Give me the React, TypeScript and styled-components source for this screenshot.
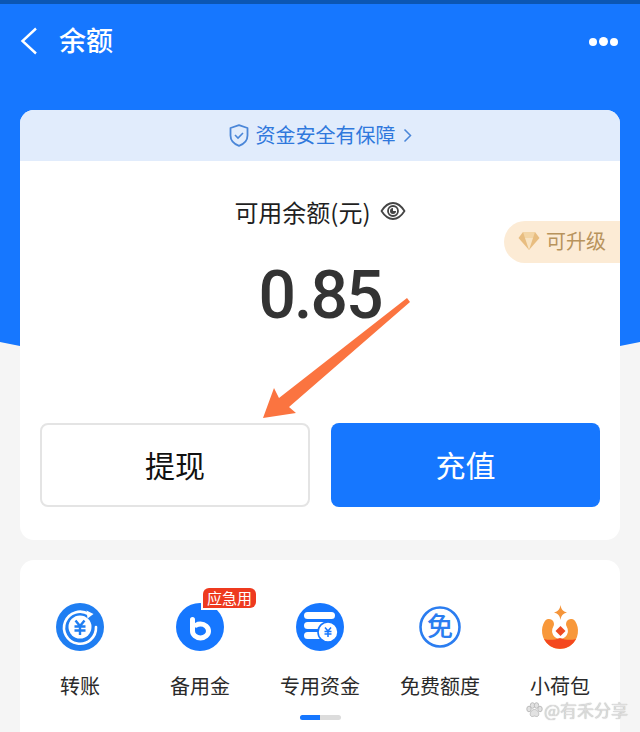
import React from 'react';
import styled, { createGlobalStyle } from 'styled-components';

const GlobalStyle = createGlobalStyle`
  html, body {
    margin: 0;
    padding: 0;
    background: #f5f5f5;
  }
  body {
    font-family: "Noto Sans CJK SC", "Noto Sans", sans-serif;
  }
`;

const tools = [
  { label: '转账', icon: <TransferIcon /> },
  { label: '备用金', icon: <ReserveIcon />, tag: '应急用' },
  { label: '专用资金', icon: <FundIcon /> },
  { label: '免费额度', icon: <FreeIcon /> },
  { label: '小荷包', icon: <PouchIcon /> },
];

function TransferIcon() {
  return (
    <svg width="48" height="48" viewBox="0 0 48 48">
      <circle cx="24" cy="24" r="24" fill="#1f7ef2" />
      <path d="M33 11.500A16 16 0 1 0 40 24" fill="none" stroke="#fff" strokeWidth="2.600" strokeLinecap="round" />
      <path d="M30.500 7.500 37.500 11 31.500 15.500z" fill="#fff" />
      <circle cx="24" cy="24" r="11.500" fill="#fff" />
      <path d="M19.500 17.500 24 23l4.500-5.500M18.500 23.500h11M18.500 27.500h11M24 23v9" fill="none" stroke="#1f7ef2" strokeWidth="2.400" />
    </svg>
  );
}

function ReserveIcon() {
  return (
    <svg width="48" height="48" viewBox="0 0 48 48">
      <circle cx="24" cy="24" r="24" fill="#1677ff" />
      <path d="M16.500 16.500V28a8 7 0 1 0 8-7c-1.500 0-3 .3-4 1" fill="none" stroke="#fff" strokeWidth="5" strokeLinecap="round" />
    </svg>
  );
}

function FundIcon() {
  return (
    <svg width="48" height="48" viewBox="0 0 48 48">
      <circle cx="24" cy="24" r="24" fill="#1677ff" />
      <rect x="8" y="9" width="31" height="7" rx="3.500" fill="#fff" />
      <rect x="8" y="19" width="24" height="7" rx="3.500" fill="#fff" />
      <rect x="8" y="29" width="24" height="7" rx="3.500" fill="#fff" />
      <circle cx="32" cy="29" r="10" fill="#fff" stroke="#1677ff" strokeWidth="1.600" />
      <path d="M29 24.500l3 3.500 3-3.500M28.500 28.500h7M28.500 31h7M32 28v6" fill="none" stroke="#1677ff" strokeWidth="1.500" />
    </svg>
  );
}

function FreeIcon() {
  return (
    <svg width="48" height="48" viewBox="0 0 48 48">
      <circle cx="24" cy="24" r="19.500" fill="#fff" stroke="#2b7df0" strokeWidth="2.600" />
      <FreeGlyph x="24" y="33" textAnchor="middle">免</FreeGlyph>
    </svg>
  );
}

function PouchIcon() {
  return (
    <svg width="48" height="48" viewBox="0 0 48 48">
      <path d="M24.500 2c.8 4.500 2.300 6.200 6.500 7.500-4.200 1.300-5.700 3-6.500 7.500-.8-4.500-2.300-6.200-6.500-7.500 4.200-1.300 5.700-3 6.500-7.500z" fill="#f5953a" />
      <path d="M13 21A13 13 0 1 0 35 21" fill="none" stroke="#f8983a" strokeWidth="10" strokeLinecap="round" />
      <path d="M8 36C13 37.500 19 37 24 35 29 37 35 37.500 40 36A18 18 0 0 1 8 36z" fill="#f4481f" />
      <path d="M24.500 23l5 5-5 5-5-5z" fill="#ef4a22" />
    </svg>
  );
}

const App: React.FC = () => {
  return (
    <Page>
      <GlobalStyle />
      <Hero>
        <StatusStrip />
        <TitleBar>
          <BackIcon width="18" height="28" viewBox="0 0 18 28">
            <path d="M16 1.500 2.500 14 16 26.500" fill="none" stroke="#fff" strokeWidth="2.400" />
          </BackIcon>
          <Title>余额</Title>
          <MoreDots>
            <Dot />
            <Dot $large />
            <Dot />
          </MoreDots>
        </TitleBar>
      </Hero>

      <BalanceCard>
        <SafetyBanner>
          <svg width="20" height="23" viewBox="0 0 20 23">
            <path d="M10 1.200 18.500 4v7.500c0 5-3.500 8.500-8.500 10.300C5 20 1.500 16.500 1.500 11.500V4z" fill="none" stroke="#4a86d8" strokeWidth="1.800" strokeLinejoin="round" />
            <path d="M6 11l3 3 5-5" fill="none" stroke="#4a86d8" strokeWidth="1.600" />
          </svg>
          <SafetyText>资金安全有保障</SafetyText>
          <svg width="9" height="15" viewBox="0 0 9 15">
            <path d="M1.500 1.500 7.500 7.500 1.500 13.500" fill="none" stroke="#4a86d8" strokeWidth="1.500" />
          </svg>
        </SafetyBanner>

        <BalanceLabel>
          <span>可用余额(元)</span>
          <svg width="26" height="20" viewBox="0 0 26 20">
            <path d="M1.500 10C5 4.500 9 2 13 2s8 2.500 11.500 8C21 15.500 17 18 13 18S5 15.500 1.500 10z" fill="none" stroke="#444" strokeWidth="1.800" strokeLinejoin="round" />
            <circle cx="13" cy="10" r="5" fill="none" stroke="#444" strokeWidth="1.800" />
            <path d="M13 7a3 3 0 1 0 3 3h-3z" fill="#444" />
          </svg>
        </BalanceLabel>

        <UpgradeBadge>
          <svg width="22" height="20" viewBox="0 0 22 20">
            <path d="M5 1h12l4.500 6L11 19 .5 7z" fill="#e8bd80" />
            <path d="M5 1h12l-2 6H7z" fill="#f3d5a5" />
            <path d="M7 7h8l-4 12z" fill="#f8e3c2" />
          </svg>
          <span>可升级</span>
        </UpgradeBadge>

        <Amount>0.85</Amount>

        <Actions>
          <ActionButton>提现</ActionButton>
          <ActionButton $primary>充值</ActionButton>
        </Actions>

        <ArrowMark width="150" height="124" viewBox="0 0 150 124">
          <path d="M144 2 147 6 26 111 33 117 0 122 11 92 16 102z" fill="#fb7440" />
        </ArrowMark>
      </BalanceCard>

      <ToolsCard>
        <ToolGrid>
          {tools.map((tool) => (
            <ToolItem key={tool.label}>
              <ToolIconWrap>
                {tool.icon}
                {tool.tag && <ToolTag>{tool.tag}</ToolTag>}
              </ToolIconWrap>
              <ToolLabel>{tool.label}</ToolLabel>
            </ToolItem>
          ))}
        </ToolGrid>
        <PagerTrack>
          <PagerThumb />
        </PagerTrack>
      </ToolsCard>

      <Watermark>
        <svg width="18" height="16" viewBox="0 0 18 16">
          <g fill="#e2e2e2" stroke="#bdbdbd" strokeWidth="1">
            <ellipse cx="4" cy="7" rx="2.200" ry="2.800" />
            <ellipse cx="7.500" cy="3.500" rx="2.200" ry="2.800" />
            <ellipse cx="11.500" cy="3.500" rx="2.200" ry="2.800" />
            <ellipse cx="15" cy="7" rx="2.200" ry="2.800" />
            <path d="M9.500 7.500c3 0 5 3.500 4 6-1 1.500-2.500 1-4 .5-1.500.5-3 1-4-.5-1-2.500 1-6 4-6z" />
          </g>
        </svg>
        <span>@有禾分享</span>
      </Watermark>
    </Page>
  );
};

export default App;

const FreeGlyph = styled.text`
  font-family: "Noto Sans CJK SC", sans-serif;
  font-size: 26px;
  font-weight: 500;
  fill: #2b7df0;
`;

const Page = styled.div`
  position: relative;
  width: 640px;
  height: 732px;
  overflow: hidden;
  background: #f5f5f5;
`;

const Hero = styled.header`
  height: 346px;
  background: #1677ff;
  clip-path: polygon(0 0, 100% 0, 100% 342px, 620px 346px, 20px 346px, 0 342px);
`;

const StatusStrip = styled.div`
  height: 4px;
  background: #0b56b3;
`;

const TitleBar = styled.div`
  display: flex;
  align-items: center;
  height: 72px;
  padding: 0 22px 0 20px;
`;

const BackIcon = styled.svg`
  margin: 2px 21px 0 0;
`;

const Title = styled.h1`
  margin: 0 0 2px;
  font-size: 27px;
  font-weight: 500;
  color: #fff;
`;

const MoreDots = styled.div`
  display: flex;
  align-items: center;
  gap: 2px;
  margin: 3px 0 0 auto;
`;

const Dot = styled.span<{ $large?: boolean }>`
  width: ${(p) => (p.$large ? 9 : 8)}px;
  height: ${(p) => (p.$large ? 9 : 8)}px;
  border-radius: 50%;
  background: #fff;
`;

const BalanceCard = styled.section`
  position: relative;
  z-index: 1;
  height: 430px;
  margin: -236px 20px 0;
  background: #fff;
  border-radius: 14px;
`;

const SafetyBanner = styled.div`
  display: flex;
  align-items: center;
  justify-content: center;
  gap: 7px;
  height: 51px;
  border-radius: 14px 14px 0 0;
  background: #e1ecfc;
`;

const SafetyText = styled.span`
  font-size: 20px;
  line-height: 26px;
  margin-bottom: 2px;
  color: #2f78dc;
`;

const BalanceLabel = styled.div`
  display: flex;
  align-items: center;
  justify-content: center;
  gap: 9px;
  height: 34px;
  margin-top: 33px;
  font-size: 24px;
  color: #1f1f1f;
`;

const UpgradeBadge = styled.div`
  position: absolute;
  top: 111px;
  right: 0;
  display: flex;
  align-items: center;
  gap: 6px;
  width: 116px;
  height: 42px;
  padding: 0 0 3px 14px;
  box-sizing: border-box;
  border-radius: 21px 0 0 21px;
  background: #fcebd5;
  font-size: 20px;
  color: #b8935c;
`;

const Amount = styled.div`
  margin-top: 35px;
  height: 66px;
  line-height: 66px;
  text-align: center;
  font-family: Roboto, "Liberation Sans", sans-serif;
  font-size: 66px;
  font-weight: 500;
  letter-spacing: -2px;
  color: #333;
`;

const Actions = styled.div`
  display: grid;
  grid-template-columns: 270px 269px;
  gap: 21px;
  margin-top: 94px;
  padding: 0 20px;
`;

const ActionButton = styled.button<{ $primary?: boolean }>`
  height: 84px;
  padding: 0 0 2px;
  border: ${(p) => (p.$primary ? 'none' : '2px solid #e4e4e4')};
  border-radius: 8px;
  background: ${(p) => (p.$primary ? '#1677ff' : '#fff')};
  color: ${(p) => (p.$primary ? '#fff' : '#111')};
  font-family: inherit;
  font-size: 30px;
`;

const ArrowMark = styled.svg`
  position: absolute;
  left: 243px;
  top: 186px;
  z-index: 2;
`;

const ToolsCard = styled.section`
  height: 190px;
  margin: 20px 20px 0;
  padding-top: 43px;
  box-sizing: border-box;
  background: #fff;
  border-radius: 14px;
`;

const ToolGrid = styled.div`
  display: grid;
  grid-template-columns: repeat(5, 1fr);
`;

const ToolItem = styled.div`
  display: flex;
  flex-direction: column;
  align-items: center;
`;

const ToolIconWrap = styled.div`
  position: relative;
  width: 48px;
  height: 48px;
  svg {
    display: block;
  }
`;

const ToolTag = styled.span`
  position: absolute;
  top: -15px;
  left: 27px;
  width: 53px;
  height: 20px;
  line-height: 20px;
  text-align: center;
  border-radius: 6px 6px 6px 0;
  background: #ee3a1f;
  box-shadow: -2px 2px 0 #fff;
  font-size: 15px;
  color: #fff;
  white-space: nowrap;
`;

const ToolLabel = styled.div`
  margin-top: 20px;
  height: 30px;
  line-height: 30px;
  font-size: 20px;
  color: #2a2a2a;
  white-space: nowrap;
`;

const PagerTrack = styled.div`
  width: 41px;
  height: 5px;
  margin: 14px auto 0;
  border-radius: 3px;
  background: #dcdcdc;
  overflow: hidden;
`;

const PagerThumb = styled.div`
  width: 20px;
  height: 100%;
  background: #1677ff;
`;

const Watermark = styled.div`
  position: absolute;
  right: 12px;
  top: 701px;
  z-index: 3;
  display: flex;
  align-items: center;
  gap: 1px;
  font-size: 17px;
  line-height: 18px;
  color: #dcdcdc;
  text-shadow: 0 0 1px #aaa;
`;
